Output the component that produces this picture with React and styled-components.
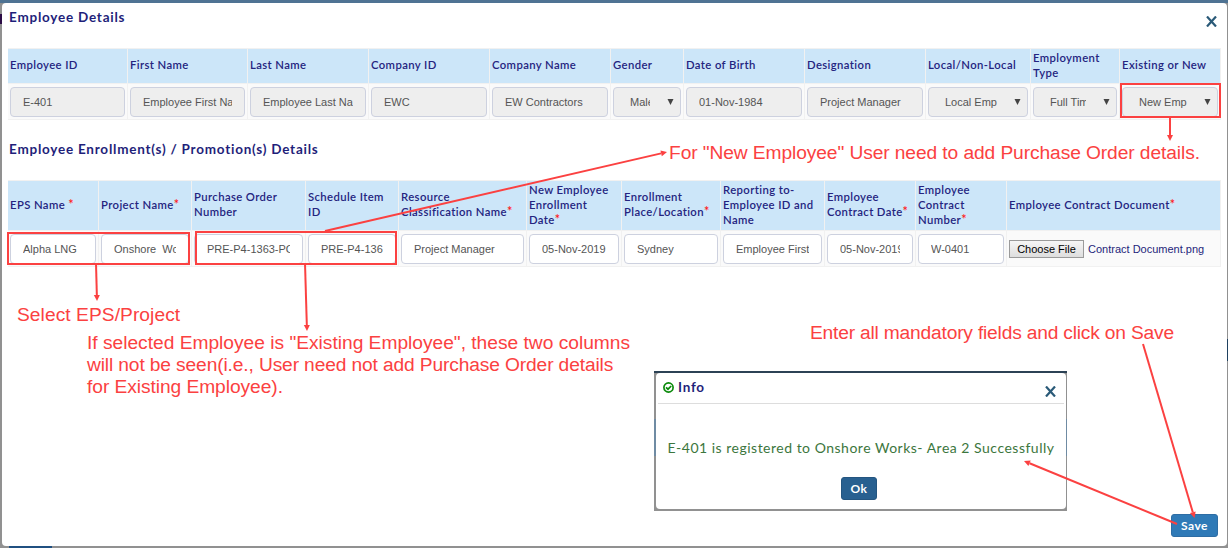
import React from "react";
import styled, { createGlobalStyle } from "styled-components";

const Global = createGlobalStyle`
  *, *::before, *::after { box-sizing: border-box; }
  body { margin: 0; font-family: Lato, "Liberation Sans", sans-serif; color: #1f1f7a; overflow: hidden; }
`;

const RED = "#fb4141";

const Backdrop = styled.div`
  position: relative;
  width: 1228px;
  height: 548px;
  padding: 3px 1px 2px 2px;
  background:
    linear-gradient(#205081, #205081) 9px 546px / 43px 2px no-repeat,
    linear-gradient(#2b0b45, #2b0b45) 0 14px / 2px 10px no-repeat,
    linear-gradient(#1f4160, #1f4160) 1227px 339px / 1px 22px no-repeat,
    linear-gradient(#4f7393, #4f7393) 0 0 / 100% 3px no-repeat,
    #919191;
`;

const Modal = styled.main`
  height: 543px;
  padding: 0 6px;
  background: #fff;
  border-radius: 4px;
  display: flex;
  flex-direction: column;
`;

const TitleBar = styled.header`
  display: flex;
  justify-content: space-between;
  height: 45px;
  padding: 6px 4px 0 1px;
`;

const Title = styled.h1`
  margin: 0;
  font-size: 13.5px;
  line-height: 17px;
  font-weight: 700;
  letter-spacing: 0.77px;
  white-space: nowrap;
`;

const CloseIcon = styled.svg`
  width: 11px;
  height: 11px;
  margin-top: ${(p) => p.$top}px;
  stroke: #2a5a78;
  stroke-width: 2.2;
  fill: none;
`;

const Grid = styled.section`
  display: grid;
  grid-template-columns: ${(p) => p.$cols};
  grid-template-rows: ${(p) => p.$rows};
  gap: 1px;
  width: 1213px;
  padding: 1px 1px 1px 0;
  background: #f1f1f1;
`;

const Head = styled.div`
  display: flex;
  align-items: center;
  padding: 0 0 3px 2px;
  background: #cce6f9;
  font-size: 11.3px;
  line-height: 15px;
  font-weight: 600;
  letter-spacing: 0.39px;
  color: #24247f;
  white-space: pre;
`;

const Star = styled.span`
  color: #ff1a1a;
  font-size: 12.5px;
  line-height: 1;
`;

const Cell = styled.div`
  display: flex;
  align-items: flex-start;
  padding: 3px 2px 0;
  background: #fafafa;
  min-width: 0;
`;

const Field = styled.div`
  display: flex;
  align-items: center;
  width: 100%;
  height: 30px;
  padding: 0 ${(p) => (p.$select ? 4 : 12)}px 0 ${(p) => (p.$select ? 16 : 12)}px;
  border: 1px solid #cdd1df;
  border-radius: 4px;
  background: ${(p) => (p.$disabled ? "#eee" : "#fff")};
  color: #555;
  font: 11px "Liberation Sans", Arial, sans-serif;
`;

const Value = styled.span`
  flex: 1;
  min-width: 0;
  overflow: hidden;
  white-space: pre;
`;

const Caret = styled.svg`
  width: 7px;
  height: 6px;
  margin-left: 17px;
  margin-right: 2px;
  fill: #444;
`;

const Section = styled.h2`
  height: 60px;
  margin: 0;
  padding: 21px 0 0 1px;
  font-size: 13.5px;
  line-height: 17px;
  font-weight: 700;
  letter-spacing: 0.77px;
`;

const FilePicker = styled.div`
  display: flex;
  align-items: center;
  gap: 4px;
  margin-top: 6px;
  font: 11px "Liberation Sans", Arial, sans-serif;
  white-space: nowrap;
`;

const FileButton = styled.button`
  width: 75px;
  height: 18px;
  padding: 0;
  border: 1px solid #9a9a9a;
  background: linear-gradient(#f6f6f6, #dedede);
  font: 11px "Liberation Sans", Arial, sans-serif;
  color: #000;
`;

const Footer = styled.footer`
  margin-top: auto;
  padding: 0 3px 9px 0;
  display: flex;
  justify-content: flex-end;
`;

const Button = styled.button`
  width: ${(p) => p.$w}px;
  height: 23px;
  padding: 0;
  border: 1px solid ${(p) => (p.$dark ? "#245580" : "#2e6da4")};
  border-radius: 3px;
  background: ${(p) => (p.$dark ? "#286090" : "#2f7ab7")};
  color: #fff;
  font: 700 12px/21px Lato, sans-serif;
  letter-spacing: 0.5px;
`;

const DialogFrame = styled.div`
  position: absolute;
  left: 654px;
  top: 371px;
  width: 413px;
  height: 140px;
  padding: 2px 1px 2px 2px;
  background:
    linear-gradient(#6f8ba3, #6f8ba3) 0 48px / 100% 37px no-repeat,
    linear-gradient(#2c4255, #2c4255) 0 0 / 100% 2px no-repeat,
    #919191;
`;

const Dialog = styled.div`
  display: flex;
  flex-direction: column;
  align-items: center;
  height: 136px;
  padding: 0 2px;
  background: #fff;
  border-radius: 4px;
`;

const DialogHead = styled.div`
  display: flex;
  justify-content: space-between;
  width: 100%;
  height: 31px;
  padding: 5px 8px 0 5px;
  border-bottom: 1px solid #ddd;
`;

const DialogTitle = styled.div`
  display: flex;
  gap: 4px;
  font-size: 13.5px;
  line-height: 18px;
  font-weight: 700;
  letter-spacing: 0.77px;
`;

const Check = styled.svg`
  width: 11px;
  height: 11px;
  margin-top: 4px;
  fill: none;
  stroke: #0a8a0a;
  stroke-width: 1.7;
`;

const Message = styled.p`
  margin: 35px 0 20px;
  font-size: 14px;
  line-height: 18px;
  letter-spacing: 0.5px;
  color: #3c763d;
  white-space: nowrap;
`;

const DialogActions = styled.div`
  padding-right: 4px;
`;

const Arrows = styled.svg`
  position: absolute;
  inset: 0;
  fill: none;
  stroke: ${RED};
  stroke-width: 2;
`;

const Note = styled.div`
  position: absolute;
  left: ${(p) => p.$x}px;
  top: ${(p) => p.$y}px;
  font: 19.2px/22px "Liberation Sans", Arial, sans-serif;
  letter-spacing: ${(p) => p.$track || 0}px;
  color: ${RED};
  white-space: pre;
`;

const NoteLine = styled.div`
  letter-spacing: ${(p) => p.$track}px;
`;

const details = [
  ["Employee ID", "E-401"],
  ["First Name", "Employee First Name"],
  ["Last Name", "Employee Last Name"],
  ["Company ID", "EWC"],
  ["Company Name", "EW Contractors"],
  ["Gender", "Male", true],
  ["Date of Birth", "01-Nov-1984"],
  ["Designation", "Project Manager"],
  ["Local/Non-Local", "Local Emp", true],
  ["Employment\nType", "Full Time", true],
  ["Existing or New", "New Emp", true],
];

const enrollment = [
  ["EPS Name ", "Alpha LNG", true],
  ["Project Name", "Onshore  Works", true],
  ["Purchase Order\nNumber", "PRE-P4-1363-PO"],
  ["Schedule Item\nID", "PRE-P4-136"],
  ["Resource\nClassification Name", "Project Manager", true],
  ["New Employee\nEnrollment\nDate", "05-Nov-2019", true],
  ["Enrollment\nPlace/Location", "Sydney", true],
  ["Reporting to-\nEmployee ID and\nName", "Employee First"],
  ["Employee\nContract Date", "05-Nov-2019", true],
  ["Employee\nContract\nNumber", "W-0401", true],
  ["Employee Contract Document", null, true],
];

function Close({ top }) {
  return (
    <CloseIcon viewBox="0 0 11 11" $top={top}>
      <path d="M1 .5 10 10.5M10 .5 1 10.5" />
    </CloseIcon>
  );
}

function Arrow({ x1, y1, x2, y2 }) {
  const len = Math.hypot(x2 - x1, y2 - y1);
  const ux = (x2 - x1) / len;
  const uy = (y2 - y1) / len;
  const bx = x2 - ux * 6;
  const by = y2 - uy * 6;
  return (
    <>
      <path d={`M${x1} ${y1}L${bx} ${by}`} />
      <path
        d={`M${x2} ${y2}L${bx - uy * 3} ${by + ux * 3}L${bx + uy * 3} ${by - ux * 3}Z`}
        fill={RED}
        stroke="none"
      />
    </>
  );
}

export default function App() {
  return (
    <Backdrop>
      <Global />
      <Modal>
        <TitleBar>
          <Title>Employee Details</Title>
          <Close top={7} />
        </TitleBar>
        <Grid
          $cols="119px 119px 120px 120px 120px 72px 120px 120px 104px 88px 100px"
          $rows="34px 35px"
        >
          {details.map(([h]) => (
            <Head key={h}>{h}</Head>
          ))}
          {details.map(([h, v, select]) => (
            <Cell key={h}>
              <Field $disabled $select={select}>
                <Value>{v}</Value>
                {select && (
                  <Caret viewBox="0 0 7 6">
                    <path d="M.5 0H6.5L3.5 6Z" />
                  </Caret>
                )}
              </Field>
            </Cell>
          ))}
        </Grid>
        <Section>Employee Enrollment(s) / Promotion(s) Details</Section>
        <Grid
          $cols="90px 92px 113px 92px 127px 94px 98px 103px 90px 90px 213px"
          $rows="49px 35px"
        >
          {enrollment.map(([h, , required]) => (
            <Head key={h}>
              <span>
                {h}
                {required && <Star>*</Star>}
              </span>
            </Head>
          ))}
          {enrollment.map(([h, v]) => (
            <Cell key={h}>
              {v ? (
                <Field>
                  <Value>{v}</Value>
                </Field>
              ) : (
                <FilePicker>
                  <FileButton>Choose File</FileButton>
                  <span>Contract Document.png</span>
                </FilePicker>
              )}
            </Cell>
          ))}
        </Grid>
        <Footer>
          <Button $w={47}>Save</Button>
        </Footer>
      </Modal>

      <DialogFrame>
        <Dialog>
          <DialogHead>
            <DialogTitle>
              <Check viewBox="0 0 11 11">
                <circle cx="5.5" cy="5.5" r="4.6" />
                <path d="M3 5.3 5 7.2 8.2 4" />
              </Check>
              Info
            </DialogTitle>
            <Close top={8} />
          </DialogHead>
          <Message>E-401 is registered to Onshore Works- Area 2 Successfully</Message>
          <DialogActions>
            <Button $w={36} $dark>
              Ok
            </Button>
          </DialogActions>
        </Dialog>
      </DialogFrame>

      <Arrows width="1228" height="548">
        <rect x="1121" y="84" width="99" height="33" />
        <rect x="8" y="233" width="181" height="31" />
        <rect x="196" y="232" width="200" height="32" />
        <Arrow x1={1170} y1={117} x2={1170} y2={141} />
        <Arrow x1={325} y1={231} x2={667} y2={152} />
        <Arrow x1={96} y1={263} x2={97} y2={301} />
        <Arrow x1={305} y1={263} x2={307} y2={331} />
        <Arrow x1={1143} y1={344} x2={1194.5} y2={518} />
        <Arrow x1={1177} y1={524} x2={1024} y2={461} />
      </Arrows>
      <Note $x={669} $y={142} $track={-0.09}>
        For "New Employee" User need to add Purchase Order details.
      </Note>
      <Note $x={17} $y={304} $track={0.06}>
        Select EPS/Project
      </Note>
      <Note $x={87} $y={332}>
        <NoteLine $track={-0.01}>
          If selected Employee is "Existing Employee", these two columns
        </NoteLine>
        <NoteLine $track={-0.13}>
          will not be seen(i.e., User need not add Purchase Order details
        </NoteLine>
        <NoteLine $track={-0.06}>for Existing Employee).</NoteLine>
      </Note>
      <Note $x={810} $y={322} $track={-0.19}>
        Enter all mandatory fields and click on Save
      </Note>
    </Backdrop>
  );
}
